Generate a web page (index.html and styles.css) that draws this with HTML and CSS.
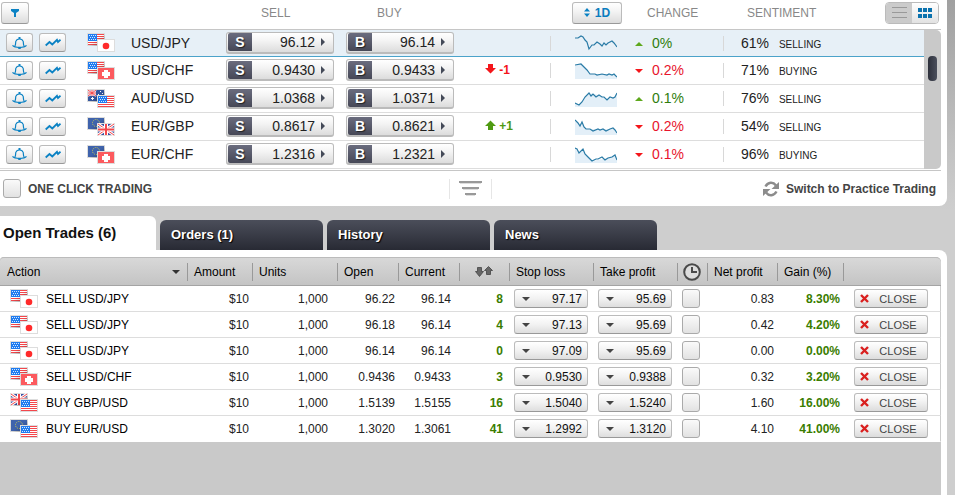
FILE: index.html
```html
<!DOCTYPE html>
<html lang="en">
<head>
    <meta charset="UTF-8">
    <meta name="viewport" content="width=device-width, initial-scale=1.0">
    <title>Trading</title>
    <link rel="stylesheet" href="styles.css">
</head>
<body>
    <!-- shared icons -->
    <svg class="defs" aria-hidden="true">
        <linearGradient id="shade" x1="0" y1="0" x2="1" y2="1">
            <stop offset="0.5" stop-color="#000" stop-opacity="0"/>
            <stop offset="1" stop-color="#000" stop-opacity="0.35"/>
        </linearGradient>
        <symbol id="us" viewBox="0 0 18 13">
            <path fill="#ddd" d="M0 0h18v13H0z"/>
            <path fill="#fff" d="M1 1h16v11H1z"/>
            <path stroke="#f4474c" d="M1 1.5h16M1 3.5h16M1 5.5h16M1 7.5h16M1 9.5h16M1 11.5h16"/>
            <path fill="#1f7cf0" d="M1 1h9v7H1z"/>
            <path stroke="#d5e8ff" stroke-dasharray="1 1" d="M2 2.5h7M3 4.5h6M2 6.5h7"/>
        </symbol>
        <symbol id="jp" viewBox="0 0 18 13">
            <path fill="#ddd" d="M0 0h18v13H0z"/>
            <path fill="#fff" d="M1 1h16v11H1z"/>
            <circle cx="9" cy="7" r="3.3" fill="#ff2a2a"/>
        </symbol>
        <symbol id="ch" viewBox="0 0 18 13">
            <path fill="#ddd" d="M0 0h18v13H0z"/>
            <path fill="#fc5a5e" d="M1 1h16v11H1z"/>
            <path fill="#fff" d="M7 3h4v2h2v4h-2v2H7V9H5V5h2z"/>
        </symbol>
        <symbol id="gb" viewBox="0 0 18 13">
            <path fill="#ddd" d="M0 0h18v13H0z"/>
            <path fill="#3b4fa0" d="M1 1h16v11H1z"/>
            <path stroke="#fff" stroke-width="3" d="M1 1l16 11M17 1L1 12"/>
            <path stroke="#f4474c" d="M1 1l16 11M17 1L1 12"/>
            <path stroke="#fff" stroke-width="4" d="M9 1v11M1 6.5h16"/>
            <path stroke="#f4474c" stroke-width="2" d="M9 1v11M1 6.5h16"/>
        </symbol>
        <symbol id="au" viewBox="0 0 18 13">
            <path fill="#ddd" d="M0 0h18v13H0z"/>
            <path fill="#35579f" d="M1 1h16v11H1z"/>
            <path stroke="#fff" stroke-width="2" d="M1 1l8 6M9 1L1 7"/>
            <path stroke="#fff" stroke-width="3" d="M5 1v6M1 4h8"/>
            <path stroke="#f4474c" d="M5 1v6M1 4h8M1 1l8 6M9 1L1 7"/>
            <path stroke="#fff" d="M4 9.500h3M5.500 8v3M13 2.500h1M11 5.500h1M15 4.500h1"/>
        </symbol>
        <symbol id="eu" viewBox="0 0 18 13">
            <path fill="#ddd" d="M0 0h18v13H0z"/>
            <path fill="#3f63ac" d="M1 1h16v11H1z"/>
            <circle cx="9" cy="6" r="3.5" fill="none" stroke="#d9d34e" stroke-dasharray="1 1.2"/>
        </symbol>
        <symbol id="bell" viewBox="0 0 15 12">
            <g fill="none" stroke="#0b82c4" stroke-width="1.2">
                <path d="M2.800 9C4.200 7.500 3.200 5 4 4 5 1.300 10 1.300 11 4 11.800 5 10.800 7.500 12.200 9"/>
                <path d="M.5 8.300C2 10 5 10.300 7.500 10.300S13 10 14.500 8.300"/>
            </g>
            <path fill="#0b82c4" d="M6.500 0h2v2h-2zM5.500 10h4l-1 2h-2z"/>
        </symbol>
        <symbol id="line" viewBox="0 0 16 9">
            <path fill="none" stroke="#0b82c4" stroke-width="1.800" d="M.7 7.500L4.500 4 7.300 6.500 12 1.800 13 4 15.500 1.800"/>
        </symbol>
        <symbol id="down" viewBox="0 0 11 10"><path d="M3 0h5v4h3L5.500 9.500 0 4h3z"/></symbol>
        <symbol id="cross" viewBox="0 0 9 9"><path stroke="#d9201f" stroke-width="2.400" d="M1 1l7 7M8 1L1 8"/></symbol>
    </svg>

    <section class="panel quotes-panel">
        <table class="quotes">
            <colgroup>
                <col class="w-bell"><col class="w-line"><col class="w-pair"><col class="w-sell"><col class="w-buy">
                <col class="w-delta"><col class="w-spark"><col class="w-change"><col><col class="w-scroll">
            </colgroup>
            <thead>
                <tr>
                    <th colspan="3" class="filter-cell">
                        <button type="button" class="btn filter" aria-label="Filter">
                            <svg width="8" height="8" viewBox="0 0 8 8"><path fill="#0b82c4" d="M0 0h8v2L5 4v4H3V4L0 2z"/></svg>
                        </button>
                    </th>
                    <th class="h-sell">SELL</th>
                    <th class="h-buy">BUY</th>
                    <th></th>
                    <th class="h-period">
                        <button type="button" class="btn period">
                            <svg width="6" height="9" viewBox="0 0 6 9"><path fill="#0b82c4" d="M3 0l3 3.500H0zM3 9l3-3.500H0z"/></svg>
                            1D
                        </button>
                    </th>
                    <th class="h-change">CHANGE</th>
                    <th colspan="2" class="h-sentiment">
                        <div class="sentiment-head">
                            SENTIMENT
                            <div class="view-switch">
                                <button type="button" class="view-list" aria-label="List view">
                                    <svg width="15" height="11" viewBox="0 0 15 11"><path stroke="#999" d="M0 .5h15M0 5.500h15M0 10.500h15"/></svg>
                                </button>
                                <button type="button" class="view-grid" aria-label="Grid view">
                                    <svg width="14" height="10" viewBox="0 0 14 10"><path fill="#0b72ae" d="M0 0h4v4H0zM5 0h4v4H5zM10 0h4v4h-4zM0 6h4v4H0zM5 6h4v4H5zM10 6h4v4h-4z"/></svg>
                                </button>
                            </div>
                        </div>
                    </th>
                </tr>
            </thead>
            <tbody>
                <tr class="selected">
                    <td><button type="button" class="btn tool" aria-label="Alert"><svg width="15" height="12"><use href="#bell"/></svg></button></td>
                    <td><button type="button" class="btn tool" aria-label="Chart"><svg width="16" height="9"><use href="#line"/></svg></button></td>
                    <td><div class="pair"><svg width="28" height="19"><use href="#us" width="18" height="13"/><path fill="url(#shade)" d="M0 0h18v13H0z"/><use href="#jp" x="10" y="6" width="18" height="13"/></svg>USD/JPY</div></td>
                    <td><button type="button" class="btn quote"><b>S</b><span>96.12</span></button></td>
                    <td><button type="button" class="btn quote"><b>B</b><span>96.14</span></button></td>
                    <td></td>
                    <td class="spark"><svg width="42" height="17"><path class="curve" d="M0 4L3 4 6 2 8 3 10 6 12 8 14 15 17 11 19 11 22 8 25 10 27 12 29 9 31 11 33 9 37 7 39 9 42 13"/></svg></td>
                    <td class="change up">0%</td>
                    <td class="sentiment">61% <small>SELLING</small></td>
                    <td rowspan="5" class="scroll"><div class="thumb"></div></td>
                </tr>
                <tr>
                    <td><button type="button" class="btn tool" aria-label="Alert"><svg width="15" height="12"><use href="#bell"/></svg></button></td>
                    <td><button type="button" class="btn tool" aria-label="Chart"><svg width="16" height="9"><use href="#line"/></svg></button></td>
                    <td><div class="pair"><svg width="28" height="19"><use href="#us" width="18" height="13"/><path fill="url(#shade)" d="M0 0h18v13H0z"/><use href="#ch" x="10" y="6" width="18" height="13"/></svg>USD/CHF</div></td>
                    <td><button type="button" class="btn quote"><b>S</b><span>0.9430</span></button></td>
                    <td><button type="button" class="btn quote"><b>B</b><span>0.9433</span></button></td>
                    <td class="delta down"><svg width="11" height="10"><use href="#down"/></svg> -1</td>
                    <td class="spark"><svg width="42" height="17"><path class="area" d="M0 17V3L6 2 8 4 12 8 15 12 37 12 42 14V17z"/><path class="curve" d="M0 3L6 2 8 4 12 8 15 12 20 12 22 13 27 12 32 13 34 12 37 13 39 12 42 15"/></svg></td>
                    <td class="change down">0.2%</td>
                    <td class="sentiment">71% <small>BUYING</small></td>
                </tr>
                <tr>
                    <td><button type="button" class="btn tool" aria-label="Alert"><svg width="15" height="12"><use href="#bell"/></svg></button></td>
                    <td><button type="button" class="btn tool" aria-label="Chart"><svg width="16" height="9"><use href="#line"/></svg></button></td>
                    <td><div class="pair"><svg width="28" height="19"><use href="#au" width="18" height="13"/><path fill="url(#shade)" d="M0 0h18v13H0z"/><use href="#us" x="10" y="6" width="18" height="13"/></svg>AUD/USD</div></td>
                    <td><button type="button" class="btn quote"><b>S</b><span>1.0368</span></button></td>
                    <td><button type="button" class="btn quote"><b>B</b><span>1.0371</span></button></td>
                    <td></td>
                    <td class="spark"><svg width="42" height="17"><path class="area" d="M0 17V13L4 15 7 12 10 7 14 3 18 4 24 5 32 9 38 8 42 3V17z"/><path class="curve" d="M0 13L4 15 7 12 10 7 14 3 16 6 18 4 21 7 24 5 27 7 29 7 32 10 35 7 38 8 40 7 42 3"/></svg></td>
                    <td class="change up">0.1%</td>
                    <td class="sentiment">76% <small>SELLING</small></td>
                </tr>
                <tr>
                    <td><button type="button" class="btn tool" aria-label="Alert"><svg width="15" height="12"><use href="#bell"/></svg></button></td>
                    <td><button type="button" class="btn tool" aria-label="Chart"><svg width="16" height="9"><use href="#line"/></svg></button></td>
                    <td><div class="pair"><svg width="28" height="19"><use href="#eu" width="18" height="13"/><path fill="url(#shade)" d="M0 0h18v13H0z"/><use href="#gb" x="10" y="6" width="18" height="13"/></svg>EUR/GBP</div></td>
                    <td><button type="button" class="btn quote"><b>S</b><span>0.8617</span></button></td>
                    <td><button type="button" class="btn quote"><b>B</b><span>0.8621</span></button></td>
                    <td class="delta up"><svg width="11" height="10"><use href="#down" transform="rotate(180 5.500 5)"/></svg> +1</td>
                    <td class="spark"><svg width="42" height="17"><path class="area" d="M0 17V2L5 8 7 4 11 11 38 11 42 15V17z"/><path class="curve" d="M0 2L3 5 5 8 7 4 9 9 11 11 15 11 18 13 23 11 25 12 28 11 31 13 35 11 38 10 40 12 42 15"/></svg></td>
                    <td class="change down">0.2%</td>
                    <td class="sentiment">54% <small>SELLING</small></td>
                </tr>
                <tr>
                    <td><button type="button" class="btn tool" aria-label="Alert"><svg width="15" height="12"><use href="#bell"/></svg></button></td>
                    <td><button type="button" class="btn tool" aria-label="Chart"><svg width="16" height="9"><use href="#line"/></svg></button></td>
                    <td><div class="pair"><svg width="28" height="19"><use href="#eu" width="18" height="13"/><path fill="url(#shade)" d="M0 0h18v13H0z"/><use href="#ch" x="10" y="6" width="18" height="13"/></svg>EUR/CHF</div></td>
                    <td><button type="button" class="btn quote"><b>S</b><span>1.2316</span></button></td>
                    <td><button type="button" class="btn quote"><b>B</b><span>1.2321</span></button></td>
                    <td></td>
                    <td class="spark"><svg width="42" height="17"><path class="area" d="M0 17V2L4 7 8 3 10 8 17 15 33 12 40 9 42 14V17z"/><path class="curve" d="M0 2L2 3 4 7 8 3 10 8 13 11 17 15 21 13 23 13 27 11 30 14 33 12 37 11 40 9 42 14"/></svg></td>
                    <td class="change down">0.1%</td>
                    <td class="sentiment">96% <small>BUYING</small></td>
                </tr>
            </tbody>
        </table>
        <div class="quotes-footer">
            <label class="one-click"><input type="checkbox" class="check"> ONE CLICK TRADING</label>
            <button type="button" class="resize" aria-label="Resize">
                <svg width="23" height="15" viewBox="0 0 23 15">
                    <path fill="#999" d="M0 0h23v2H0zM3 6h17v2H3zM6 12h11v2H6z"/>
                    <path fill="#ddd" d="M1 2h21v1H1zM4 8h15v1H4zM7 14h9v1H7z"/>
                </svg>
            </button>
            <a href="#" class="switch">
                <svg width="16" height="16" viewBox="0 0 16 16">
                    <g fill="none" stroke="#8c8c8c" stroke-width="2.500"><path d="M2.500 5.500C5 1 10 .5 13 4.500"/><path d="M13.500 10.500C11 15 6 15.500 3 11.500"/></g>
                    <path fill="#8c8c8c" d="M16 1v7H8.500zM0 15V8h7.500z"/>
                </svg>
                Switch to Practice Trading
            </a>
        </div>
    </section>

    <nav class="tabs">
        <a href="#" class="tab active">Open Trades (6)</a>
        <a href="#" class="tab">Orders (1)</a>
        <a href="#" class="tab">History</a>
        <a href="#" class="tab">News</a>
    </nav>

    <section class="panel trades-panel">
        <div class="trades-area">
        <table class="trades">
            <colgroup>
                <col class="t-action"><col class="t-amount"><col class="t-units"><col class="t-price"><col class="t-price"><col class="t-pips">
                <col class="t-limit"><col class="t-limit"><col class="t-clock"><col class="t-net"><col class="t-gain"><col>
            </colgroup>
            <thead>
                <tr>
                    <th><span class="sorted">Action</span></th>
                    <th>Amount</th>
                    <th>Units</th>
                    <th>Open</th>
                    <th>Current</th>
                    <th class="center" aria-label="Pips">
                        <svg width="18" height="11" viewBox="0 0 18 11"><g fill="#666" stroke="#444" stroke-width=".8"><path d="M2.500 1.500h4v4h2l-4 5-4-5h2z"/><path d="M11.500 8.500v-4h-2l4-4 4 4h-2v4z"/></g></svg>
                    </th>
                    <th>Stop loss</th>
                    <th>Take profit</th>
                    <th class="center" aria-label="Expiry">
                        <svg width="18" height="18" viewBox="0 0 18 18"><circle cx="9" cy="9" r="7.800" fill="#ddd" stroke="#4a4a4a" stroke-width="2"/><path fill="none" stroke="#4a4a4a" stroke-width="2" d="M9 4v5h5"/></svg>
                    </th>
                    <th>Net profit</th>
                    <th>Gain (%)</th>
                    <th></th>
                </tr>
            </thead>
            <tbody>
                <tr>
                    <td class="action"><div class="pair"><svg width="28" height="19"><use href="#us" width="18" height="13"/><path fill="url(#shade)" d="M0 0h18v13H0z"/><use href="#jp" x="10" y="6" width="18" height="13"/></svg>SELL USD/JPY</div></td>
                    <td class="num">$10</td>
                    <td class="num units">1,000</td>
                    <td class="num">96.22</td>
                    <td class="num current">96.14</td>
                    <td class="num pips">8</td>
                    <td><span class="drop"><select aria-label="Stop loss"><option>97.17</option></select></span></td>
                    <td><span class="drop"><select aria-label="Take profit"><option>95.69</option></select></span></td>
                    <td><input type="checkbox" class="check" aria-label="Expiry"></td>
                    <td class="num">0.83</td>
                    <td class="num gain">8.30%</td>
                    <td class="last"><button type="button" class="btn close"><svg width="9" height="9"><use href="#cross"/></svg>CLOSE</button></td>
                </tr>
                <tr>
                    <td class="action"><div class="pair"><svg width="28" height="19"><use href="#us" width="18" height="13"/><path fill="url(#shade)" d="M0 0h18v13H0z"/><use href="#jp" x="10" y="6" width="18" height="13"/></svg>SELL USD/JPY</div></td>
                    <td class="num">$10</td>
                    <td class="num units">1,000</td>
                    <td class="num">96.18</td>
                    <td class="num current">96.14</td>
                    <td class="num pips">4</td>
                    <td><span class="drop"><select aria-label="Stop loss"><option>97.13</option></select></span></td>
                    <td><span class="drop"><select aria-label="Take profit"><option>95.69</option></select></span></td>
                    <td><input type="checkbox" class="check" aria-label="Expiry"></td>
                    <td class="num">0.42</td>
                    <td class="num gain">4.20%</td>
                    <td class="last"><button type="button" class="btn close"><svg width="9" height="9"><use href="#cross"/></svg>CLOSE</button></td>
                </tr>
                <tr>
                    <td class="action"><div class="pair"><svg width="28" height="19"><use href="#us" width="18" height="13"/><path fill="url(#shade)" d="M0 0h18v13H0z"/><use href="#jp" x="10" y="6" width="18" height="13"/></svg>SELL USD/JPY</div></td>
                    <td class="num">$10</td>
                    <td class="num units">1,000</td>
                    <td class="num">96.14</td>
                    <td class="num current">96.14</td>
                    <td class="num pips">0</td>
                    <td><span class="drop"><select aria-label="Stop loss"><option>97.09</option></select></span></td>
                    <td><span class="drop"><select aria-label="Take profit"><option>95.69</option></select></span></td>
                    <td><input type="checkbox" class="check" aria-label="Expiry"></td>
                    <td class="num">0.00</td>
                    <td class="num gain">0.00%</td>
                    <td class="last"><button type="button" class="btn close"><svg width="9" height="9"><use href="#cross"/></svg>CLOSE</button></td>
                </tr>
                <tr>
                    <td class="action"><div class="pair"><svg width="28" height="19"><use href="#us" width="18" height="13"/><path fill="url(#shade)" d="M0 0h18v13H0z"/><use href="#ch" x="10" y="6" width="18" height="13"/></svg>SELL USD/CHF</div></td>
                    <td class="num">$10</td>
                    <td class="num units">1,000</td>
                    <td class="num">0.9436</td>
                    <td class="num current">0.9433</td>
                    <td class="num pips">3</td>
                    <td><span class="drop"><select aria-label="Stop loss"><option>0.9530</option></select></span></td>
                    <td><span class="drop"><select aria-label="Take profit"><option>0.9388</option></select></span></td>
                    <td><input type="checkbox" class="check" aria-label="Expiry"></td>
                    <td class="num">0.32</td>
                    <td class="num gain">3.20%</td>
                    <td class="last"><button type="button" class="btn close"><svg width="9" height="9"><use href="#cross"/></svg>CLOSE</button></td>
                </tr>
                <tr>
                    <td class="action"><div class="pair"><svg width="28" height="19"><use href="#gb" width="18" height="13"/><path fill="url(#shade)" d="M0 0h18v13H0z"/><use href="#us" x="10" y="6" width="18" height="13"/></svg>BUY GBP/USD</div></td>
                    <td class="num">$10</td>
                    <td class="num units">1,000</td>
                    <td class="num">1.5139</td>
                    <td class="num current">1.5155</td>
                    <td class="num pips">16</td>
                    <td><span class="drop"><select aria-label="Stop loss"><option>1.5040</option></select></span></td>
                    <td><span class="drop"><select aria-label="Take profit"><option>1.5240</option></select></span></td>
                    <td><input type="checkbox" class="check" aria-label="Expiry"></td>
                    <td class="num">1.60</td>
                    <td class="num gain">16.00%</td>
                    <td class="last"><button type="button" class="btn close"><svg width="9" height="9"><use href="#cross"/></svg>CLOSE</button></td>
                </tr>
                <tr>
                    <td class="action"><div class="pair"><svg width="28" height="19"><use href="#eu" width="18" height="13"/><path fill="url(#shade)" d="M0 0h18v13H0z"/><use href="#us" x="10" y="6" width="18" height="13"/></svg>BUY EUR/USD</div></td>
                    <td class="num">$10</td>
                    <td class="num units">1,000</td>
                    <td class="num">1.3020</td>
                    <td class="num current">1.3061</td>
                    <td class="num pips">41</td>
                    <td><span class="drop"><select aria-label="Stop loss"><option>1.2992</option></select></span></td>
                    <td><span class="drop"><select aria-label="Take profit"><option>1.3120</option></select></span></td>
                    <td><input type="checkbox" class="check" aria-label="Expiry"></td>
                    <td class="num">4.10</td>
                    <td class="num gain">41.00%</td>
                    <td class="last"><button type="button" class="btn close"><svg width="9" height="9"><use href="#cross"/></svg>CLOSE</button></td>
                </tr>
            </tbody>
        </table>
        </div>
    </section>
</body>
</html>
```
FILE: styles.css
```css
* { box-sizing: border-box; }
body { margin: 0; min-height: 100vh; display: flex; flex-direction: column; padding-right: 8px; font-family: "Liberation Sans", Arial, sans-serif; font-size: 12px; color: #222; background: #cecece linear-gradient(#a0a0a0, #c0c0c0 140px, #cecece 210px); }
svg { display: block; }
.defs { position: absolute; width: 0; height: 0; }
table { width: 100%; table-layout: fixed; border-collapse: separate; border-spacing: 0; }
th, td { padding: 0; text-align: left; font-weight: normal; white-space: nowrap; }
button, select, input { font-family: inherit; margin: 0; }
.panel { background: #fff; padding-right: 6px; }

/* buttons */
.btn { display: flex; align-items: center; justify-content: center; padding: 0; border: 1px solid #bbb; border-bottom-color: #999; border-radius: 3px; background: linear-gradient(#fff, #f4f4f4 40%, #dcdcdc); color: #222; cursor: pointer; }
.btn:hover { border-color: #888; }
.filter { width: 28px; height: 22px; }
.period { width: 50px; height: 22px; gap: 5px; color: #0b7dbf; font-size: 12px; font-weight: bold; }
.tool { width: 27px; height: 19px; }
.quote { width: 108px; height: 22px; justify-content: space-between; padding: 0 8px 0 1px; border-width: 1px 1px 2px; border-color: #bbb; font-size: 14px; }
.quote b { width: 24px; height: 18px; line-height: 18px; color: #fff; background: linear-gradient(#6a6c7e, #464857); border-radius: 2px 0 0 2px; text-shadow: 1px 1px 1px #222; }
.quote span { display: flex; align-items: center; gap: 6px; }
.quote span::after { content: ""; border: 4px solid transparent; border-left: 4px solid #444a58; border-right: 0; }
.check { appearance: none; display: block; width: 18px; height: 19px; border: 1px solid #aaa; border-radius: 3px; background: linear-gradient(#fafafa, #e2e2e2); }
.check:checked { background: #0b82c4; }

/* quotes */
.quotes-panel { border-bottom-right-radius: 8px; }
.w-bell { width: 39px; }
.w-line { width: 38px; }
.w-pair { width: 144px; }
.w-sell { width: 120px; }
.w-buy { width: 120px; }
.w-delta { width: 89px; }
.w-spark { width: 85px; }
.w-change { width: 88px; }
.w-scroll { width: 17px; }
.quotes th { height: 30px; padding-bottom: 4px; border-bottom: 1px solid #c6c6c6; color: #888; }
.quotes td { height: 28px; padding-bottom: 1px; border-bottom: 1px solid #ddd; font-size: 14px; }
.quotes tr:first-child td { height: 27px; }
.quotes .selected td { background-color: #e7f0f7; border-bottom: 1px solid #4ba3ca; }
.quotes .filter-cell { padding-left: 1px; }
.quotes .h-sell { padding-left: 40px; }
.quotes .h-buy { padding-left: 36px; }
.quotes .h-period { padding-left: 22px; }
.quotes .h-change { padding-left: 12px; }
.quotes .h-sentiment { padding-left: 24px; padding-right: 2px; }
.sentiment-head { display: flex; align-items: center; justify-content: space-between; }
.quotes td:nth-child(1) { padding-left: 6px; }
.quotes td:nth-child(4), .quotes td:nth-child(5) { padding-left: 5px; }
.pair { display: flex; align-items: center; gap: 16px; padding-left: 10px; }
.delta { padding-left: 24px; }
.quotes .delta { font-size: 12px; font-weight: bold; }
.delta svg { display: inline-block; fill: currentColor; }
.quotes .delta.up { color: #4f9a12; }
.quotes .delta.down { color: #f4161b; }
.spark { padding-left: 25px; background: linear-gradient(#d8d8d8, #d8d8d8) left center / 1px 15px no-repeat; }
.curve { fill: none; stroke: #2a7ba6; stroke-width: 1.2; }
.area { fill: #e3eff8; }
.change::before { content: ""; display: inline-block; margin-right: 9px; vertical-align: middle; border: 4px solid transparent; }
.change.up { color: #2f7d0d; }
.change.up::before { border-top: 0; border-bottom-color: #5ea81c; }
.change.down { color: #e8142c; }
.change.down::before { border-bottom: 0; border-top-color: #f4161b; }
.sentiment { padding-left: 18px; background: linear-gradient(#d8d8d8, #d8d8d8) left center / 1px 15px no-repeat; }
.sentiment small { margin-left: 6px; font-size: 10px; }
.quotes .scroll, .quotes .selected .scroll { padding: 26px 4px 0; vertical-align: top; background: #c9c9c9; border: 0; border-radius: 0 5px 5px 0; }
.thumb { height: 25px; border-radius: 4px; background: linear-gradient(90deg, #2d303b, #4b4f5c); }
.view-switch { display: flex; border: 1px solid #bbb; border-radius: 4px; overflow: hidden; }
.view-switch button { display: flex; align-items: center; justify-content: center; width: 26px; height: 20px; padding: 0; border: 0; cursor: pointer; }
.view-list { background: #cbcbcb; }
.view-grid { background: linear-gradient(#fff, #e2e2e2); }

.quotes-footer { display: grid; grid-template-columns: 1fr auto 1fr; align-items: center; height: 36px; padding: 0 3px; border-top: 1px solid #c6c6c6; margin-top: 1px; font-weight: bold; color: #444; }
.one-click { display: flex; align-items: center; gap: 7px; }
.resize { padding: 2px 9px 3px; border: solid #e6e6e6; border-width: 0 1px; background: none; cursor: pointer; }
.switch { display: flex; align-items: center; justify-content: flex-end; gap: 7px; padding-right: 2px; color: #444; text-decoration: none; }

/* tabs */
.tabs { display: flex; align-items: flex-end; gap: 4px; padding-top: 10px; }
.tab { width: 163px; height: 30px; padding: 0 11px; border-radius: 6px 6px 0 0; background: linear-gradient(#4b4e5a, #282a34); color: #fff; font-size: 13px; font-weight: bold; line-height: 29px; text-decoration: none; text-shadow: 1px 1px 1px #000; }
.tab.active { width: 156px; height: 34px; padding: 0 3px; border-top-left-radius: 0; background: #fff; color: #111; font-size: 15px; line-height: 34px; text-shadow: none; }

/* trades */
.trades-panel { flex: 1; display: flex; padding-top: 7px; border-top-right-radius: 8px; }
.trades-area { flex: 1; min-width: 0; background: #c9c9c9; border-radius: 4px 5px 0 0; }
.t-action { width: 187px; }
.t-amount { width: 65px; }
.t-units { width: 85px; }
.t-price { width: 61px; }
.t-pips { width: 50px; }
.t-limit { width: 84px; }
.t-clock { width: 30px; }
.t-net { width: 70px; }
.t-gain { width: 66px; }
.trades th { height: 29px; padding-left: 7px; border-top: 1px solid #bbb; border-bottom: 1px solid #a4a4a4; color: #000; background: linear-gradient(#999, #999) left center / 1px 18px no-repeat, linear-gradient(#d8d8d8, #c4c4c4); }
.trades th:first-child { background: linear-gradient(#d8d8d8, #c4c4c4); border-top-left-radius: 4px; }
.trades th:last-child { border-top-right-radius: 5px; }
.trades th.center { padding-left: 0; }
.trades th.center svg { margin: 0 auto; }
.sorted { display: flex; align-items: center; justify-content: space-between; padding-right: 7px; }
.sorted::after { content: ""; border: 4px solid transparent; border-top-color: #333; border-bottom: 0; }
.trades td { height: 26px; padding-left: 5px; background: #fff; border-bottom: 1px solid #ddd; }
.trades tr:last-child td { border-bottom-color: #fff; }
.trades .action { padding-left: 0; color: #000; }
.trades .pair { gap: 8px; }
.trades .num { padding: 0 3px 0 0; text-align: right; }
.trades .units { padding-right: 9px; }
.trades .current { padding-right: 8px; }
.trades .pips { padding-right: 6px; color: #3a7d00; font-weight: bold; }
.trades .gain { color: #3a7d00; font-weight: bold; }
.trades .last { padding-left: 11px; border-right: 1px solid #ccc; }
.drop { position: relative; display: block; width: 74px; }
.drop::before { content: ""; position: absolute; left: 8px; top: 8px; border: 4px solid transparent; border-top-color: #444; border-bottom: 0; pointer-events: none; }
.drop select { appearance: none; display: block; width: 100%; height: 19px; padding: 0 5px; border: 1px solid #bbb; border-bottom-color: #999; border-radius: 3px; background: linear-gradient(#fff, #f2f2f2 50%, #dedede); color: #111; font-size: 12px; text-align: right; text-align-last: right; }
.close { width: 74px; height: 19px; gap: 10px; padding-right: 5px; font-size: 11px; color: #444; }
```
